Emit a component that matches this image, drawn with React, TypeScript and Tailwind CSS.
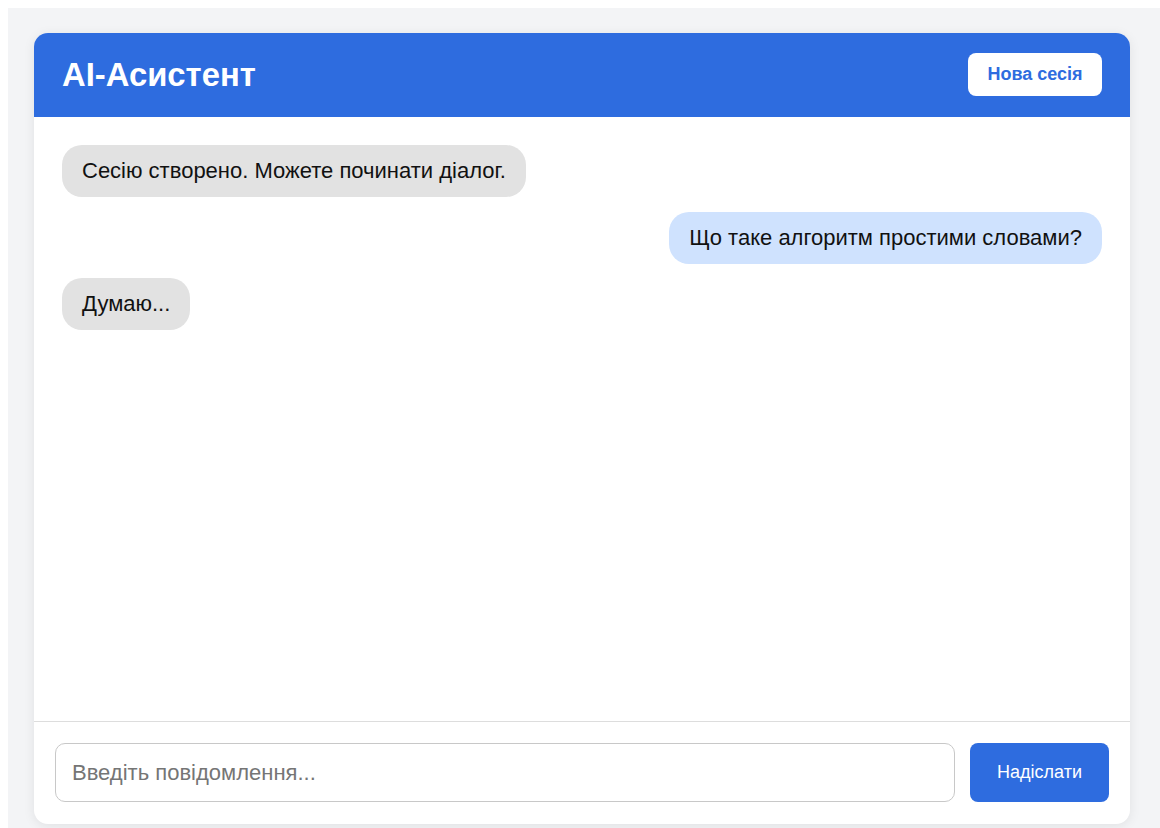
import React, { useState } from 'react';

type Message = { id: number; role: 'bot' | 'user'; text: string };

const initialMessages: Message[] = [
  { id: 1, role: 'bot', text: 'Сесію створено. Можете починати діалог.' },
  { id: 2, role: 'user', text: 'Що таке алгоритм простими словами?' },
  { id: 3, role: 'bot', text: 'Думаю...' },
];

function Bubble({ message }: { message: Message }) {
  const isUser = message.role === 'user';
  return (
    <div className={isUser ? 'flex justify-end' : 'flex justify-start'}>
      <div
        className={
          isUser
            ? 'rounded-[20px] bg-[#cfe2fe] px-5 py-[13px] text-[22px] leading-[26px] text-[#111]'
            : 'rounded-[20px] bg-[#e2e2e2] px-5 py-[13px] text-[22px] leading-[26px] text-[#111]'
        }
      >
        {message.text}
      </div>
    </div>
  );
}

export default function App() {
  const [messages] = useState<Message[]>(initialMessages);
  const [draft, setDraft] = useState('');

  return (
    <div className="h-[828px] overflow-hidden bg-white pl-2 pt-2 font-['Liberation_Sans',Arial,sans-serif]">
      <div className="h-full bg-[#f3f4f6] pl-[26px] pt-[25px]">
        <div className="flex h-[791px] w-[1096px] flex-col overflow-hidden rounded-[14px] bg-white shadow-[0_2px_12px_rgba(0,0,0,0.08)]">
          {/* header */}
          <div className="flex h-[84px] items-center justify-between bg-[#2e6cdf] px-[28px]">
            <h1 className="text-[32.8px] font-bold text-white">AI-Асистент</h1>
            <button className="mt-[-1px] h-[43px] w-[134px] rounded-[8px] bg-white text-[18px] font-bold text-[#2e6cdf]">
              Нова сесія
            </button>
          </div>

          {/* chat */}
          <div className="flex flex-1 flex-col gap-[14.5px] overflow-y-auto px-[28px] pt-[28px]">
            {messages.map((m) => (
              <Bubble key={m.id} message={m} />
            ))}
          </div>

          {/* input row */}
          <div className="flex gap-[15px] border-t border-[#dddddd] px-[21px] pb-[22px] pt-[21px]">
            <input
              value={draft}
              onChange={(e) => setDraft(e.target.value)}
              placeholder="Введіть повідомлення..."
              className="h-[59px] flex-1 rounded-[10px] border border-[#c8c8c8] px-4 text-[22px] text-[#222] outline-none placeholder:text-[#757575]"
            />
            <button className="h-[59px] w-[139px] rounded-[8px] bg-[#2e6cdf] text-[18px] text-white">
              Надіслати
            </button>
          </div>
        </div>
      </div>
    </div>
  );
}
